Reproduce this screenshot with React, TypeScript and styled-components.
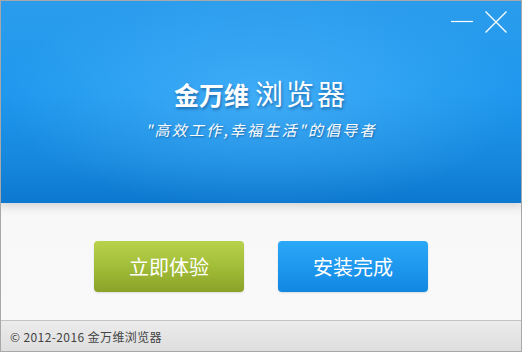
import styled, { createGlobalStyle } from 'styled-components';

const GlobalStyle = createGlobalStyle`
  html, body {
    margin: 0;
    padding: 0;
    background: #ffffff;
  }
`;

const App = () => {
  return (
    <>
      <GlobalStyle />
      <Window>
        <Banner>
          <WindowControls>
            <ControlButton aria-label="minimize">
              <svg width="24" height="24" viewBox="0 0 24 24">
                <line x1="1" y1="11.5" x2="23" y2="11.5" stroke="#fff" strokeWidth="1.2" />
              </svg>
            </ControlButton>
            <ControlButton aria-label="close">
              <svg width="24" height="24" viewBox="0 0 24 24">
                <line x1="1.5" y1="1.5" x2="22.5" y2="22.5" stroke="#fff" strokeWidth="1.2" />
                <line x1="22.5" y1="1.5" x2="1.5" y2="22.5" stroke="#fff" strokeWidth="1.2" />
              </svg>
            </ControlButton>
          </WindowControls>
          <Title>
            <Brand>金万维</Brand>
            <Product>浏览器</Product>
          </Title>
          <Slogan>"高效工作,幸福生活"的倡导者</Slogan>
        </Banner>

        <Body>
          <ActionButton $tone="green">立即体验</ActionButton>
          <ActionButton $tone="blue">安装完成</ActionButton>
        </Body>

        <Footer>© 2012-2016 金万维浏览器</Footer>
      </Window>
    </>
  );
};

const Window = styled.div`
  width: 522px;
  height: 352px;
  box-sizing: border-box;
  border: 1px solid #a8a8a8;
  display: flex;
  flex-direction: column;
  background: #f8f8f8;
  font-family: "Noto Sans CJK SC", "Noto Sans", sans-serif;
  overflow: hidden;
`;

const Banner = styled.div`
  position: relative;
  height: 202px;
  flex-shrink: 0;
  display: flex;
  flex-direction: column;
  align-items: center;
  background:
    radial-gradient(ellipse 260px 110px at 50% 48%, rgba(90, 190, 255, 0.55), rgba(90, 190, 255, 0) 100%),
    linear-gradient(to bottom, #2b9cec 0%, #1f98ee 45%, #1687dd 80%, #0d78cf 100%);
  box-shadow: 0 2px 8px rgba(0, 0, 0, 0.12);
  z-index: 1;
`;

const WindowControls = styled.div`
  position: absolute;
  top: 9px;
  right: 13px;
  display: flex;
  gap: 10px;
`;

const ControlButton = styled.div`
  width: 24px;
  height: 24px;
  display: flex;
  align-items: center;
  justify-content: center;
  cursor: pointer;
`;

const Title = styled.div`
  margin-top: 74px;
  display: flex;
  align-items: baseline;
  gap: 6px;
  color: #ffffff;
  text-shadow: 1px 2px 3px rgba(0, 40, 90, 0.45);
  line-height: 36px;
`;

const Brand = styled.span`
  font-size: 25px;
  font-weight: 700;
`;

const Product = styled.span`
  font-size: 28px;
  font-weight: 400;
  letter-spacing: 3px;
`;

const Slogan = styled.div`
  margin-top: 7px;
  font-size: 15px;
  letter-spacing: 2.2px;
  color: #ffffff;
  font-style: italic;
  text-shadow: 1px 1px 2px rgba(0, 40, 90, 0.45);
`;

const Body = styled.div`
  flex: 1;
  display: flex;
  justify-content: center;
  align-items: center;
  gap: 34px;
  padding-top: 9px;
  background: linear-gradient(to bottom, #eeeeee 0px, #f8f8f8 14px, #f9f9f9 100%);
`;

const ActionButton = styled.div<{ $tone: 'green' | 'blue' }>`
  width: 150px;
  height: 51px;
  border-radius: 4px;
  display: flex;
  align-items: center;
  justify-content: center;
  color: #ffffff;
  font-size: 20px;
  cursor: pointer;
  box-shadow: 0 1px 2px rgba(0, 0, 0, 0.12);
  background: ${({ $tone }) =>
    $tone === 'green'
      ? 'linear-gradient(to bottom, #b9d24c 0%, #a2bd38 50%, #8ba229 100%)'
      : 'linear-gradient(to bottom, #2ba8f7 0%, #1e98ee 50%, #1187e2 100%)'};
`;

const Footer = styled.div`
  height: 30px;
  flex-shrink: 0;
  border-top: 1px solid #c4c4c4;
  background: linear-gradient(to bottom, #ececec 0%, #dedede 100%);
  display: flex;
  align-items: center;
  padding-left: 9px;
  font-size: 12px;
  letter-spacing: 0.4px;
  color: #444444;
`;

export default App;
